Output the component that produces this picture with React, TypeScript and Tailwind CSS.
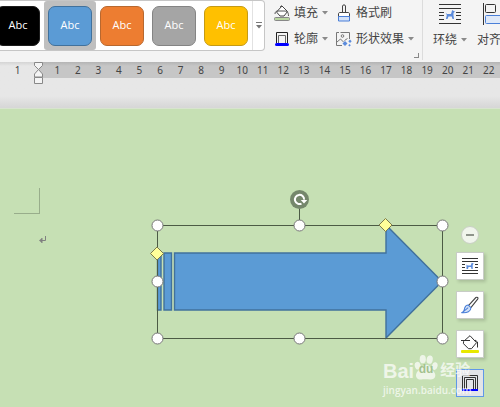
import type { ReactNode } from "react";

const swatches = [
  { name: "Black", style: "bg-black border-[#1c1c1c]" },
  { name: "Blue", style: "bg-[#5b9bd5] border-[#41719c]" },
  { name: "Orange", style: "bg-[#ed7d31] border-[#b8682f]" },
  { name: "Gray", style: "bg-[#a5a5a5] border-[#848484]" },
  { name: "Gold", style: "bg-[#ffc000] border-[#c49a16]" },
];

const rulerMarks = Array.from({ length: 22 }, (_, i) => i + 1);

function Caret() {
  return (
    <svg width="6" height="4" viewBox="0 0 6 4" className="shrink-0" aria-hidden="true">
      <path d="M0 0h6L3 3.5z" fill="#8a8a8a" />
    </svg>
  );
}

function RibbonWrapIcon() {
  return (
    <svg width="22" height="20" viewBox="0 0 22 20" aria-hidden="true">
      <path
        d="M0 .5h22M0 4.500h22M0 8.500h5M0 11.500h5M0 15.500h5M17 8.500h5M17 11.500h5M17 15.500h5M0 19.500h22"
        stroke="#333"
      />
      <path d="M6.500 8.500l1.500 1.500h4l1.200-4 1 .8 1.800.7-1.500 1.500v2.500l.5 3.500h-1.500l-.8-2.500H9.500L8.500 15H7l.8-4z" fill="#5b8bdc" />
    </svg>
  );
}

function WrapIcon() {
  return (
    <svg width="16" height="16" viewBox="0 0 16 16" aria-hidden="true">
      <path
        d="M0 .5h16M0 3.500h16M0 6.500h3M0 9.500h3M0 12.500h16M13 6.500h3M13 9.500h3M0 15.500h16"
        stroke="#333"
      />
      <path d="M4.500 6.500l1.200 1h3l1-2.800 2 .8-1 1.500v4H9.500L9 9H6.500L6 11H4.500z" fill="#5b8bdc" />
    </svg>
  );
}

function RibbonFillIcon() {
  return (
    <svg width="16" height="16" viewBox="0 0 16 16" fill="none" aria-hidden="true">
      <rect x=".5" y="12.500" width="15" height="3" rx="1" fill="#b9d6a0" stroke="#888" />
      <path d="M2.500 7L8 1l5.500 5.500L10 11H6z" fill="#fff" stroke="#444" />
      <path d="M1 9c0-2 1-3 3-3h6c3 0 4.500 1 4.500 5M6 2l2-1.500" stroke="#555" />
    </svg>
  );
}

function FillIcon() {
  return (
    <svg width="18" height="18" viewBox="0 0 18 18" fill="none" aria-hidden="true">
      <rect x="0" y="15" width="18" height="3" rx="1" fill="#e8e800" />
      <path d="M2.500 6.500L9 .7l6.500 7-5 6h-3l-5-5z" fill="#fff" stroke="#333" />
      <path d="M0 5.500h9M14 5l2.500 2v5.500" stroke="#333" />
    </svg>
  );
}

function RibbonOutlineIcon() {
  return (
    <svg width="14" height="15" viewBox="0 0 14 15" fill="none" aria-hidden="true">
      <path d="M1.500 11V.5h11V11" stroke="#222" />
      <path d="M3.500 11V3.500h7V11" stroke="#666" />
      <rect x="0" y="11" width="14" height="3" rx="1.500" fill="#00f" />
    </svg>
  );
}

function OutlineIcon() {
  return (
    <svg width="18" height="18" viewBox="0 0 18 18" fill="none" aria-hidden="true">
      <path d="M1.500 16V1.500h15V16M3.500 15V3.500h11V15M5.500 15V5.500h7V15" stroke="#333" />
      <rect x="1" y="15" width="16" height="2" fill="#00f" />
    </svg>
  );
}

function PainterIcon() {
  return (
    <svg width="14" height="18" viewBox="0 0 14 18" fill="none" aria-hidden="true">
      <path d="M5.500 8.500V2c0-1.500 3-1.500 3 0v6.500" stroke="#444" />
      <path d="M1.500 13V10c0-1 .5-1.500 1.500-1.500h8c1 0 1.500.500 1.500 1.500v3" fill="#fff" stroke="#444" />
      <path d="M1.500 12.500h11V17h-11z" fill="#d3e2f8" stroke="#4a7fd8" />
    </svg>
  );
}

function EffectsIcon() {
  return (
    <svg width="16" height="16" viewBox="0 0 16 16" fill="none" aria-hidden="true">
      <path d="M6 14.500H.5v-13H3M4.500 1.500H13.500V8M1 11l3.500-3 3 3M8.500 9.500l3-2" stroke="#777" />
      <circle cx="6.500" cy="5" r="1.300" stroke="#777" />
      <path d="M9 10l2.500 2.500L9 15l-2.500-2.500zM14 8.500l1.700 1.700-1.700 1.700-1.700-1.700zM13.500 13l1.300 1.300-1.300 1.300-1.300-1.300z" fill="#5b8bdc" />
    </svg>
  );
}

function AlignIcon() {
  return (
    <svg width="24" height="22" viewBox="0 0 24 22" fill="none" aria-hidden="true">
      <path d="M1.500 0v22" stroke="#333" />
      <rect x="3.500" y="1.500" width="10" height="8" rx="1" stroke="#333" />
      <rect x="3.500" y="12.500" width="18" height="8" rx="1" fill="#dfe9f8" stroke="#4a7fd8" />
    </svg>
  );
}

function BrushIcon() {
  return (
    <svg width="18" height="18" viewBox="0 0 20 20" fill="none" aria-hidden="true">
      <path d="M8.500 10.500l8-8.800c1.500-1 3 .3 2 1.800L11 13" fill="#fff" stroke="#444" strokeWidth="1.200" />
      <path d="M8 10l3 3c0 4-4 6-10 5.500 3-1.500 2.500-3 3.200-5.500C5 11 6.500 10 8 10zM2 18l6-5" fill="#d3e2f8" stroke="#4a7fd8" strokeWidth="1.200" />
    </svg>
  );
}

function Command({ icon, label, caret = false }: { icon: ReactNode; label: string; caret?: boolean }) {
  return (
    <button type="button" className="flex h-[26px] items-center gap-1 whitespace-nowrap">
      <span className="flex w-4 justify-center">{icon}</span>
      <span>{label}</span>
      {caret && <Caret />}
    </button>
  );
}

function LargeCommand({ icon, label }: { icon: ReactNode; label: string }) {
  return (
    <button type="button" className="flex shrink-0 flex-col items-center whitespace-nowrap">
      <span className="flex h-[26px] items-center">{icon}</span>
      <span className="flex h-[26px] items-center gap-1">
        {label}
        <Caret />
      </span>
    </button>
  );
}

function Ribbon() {
  return (
    <header className="flex h-[62px] items-start overflow-hidden bg-[#f4f4f4] text-xs text-[#444]">
      <div className="flex h-[51px] w-[265px] shrink-0 overflow-hidden rounded-r-[4px] border border-l-0 border-[#c6c6c6] bg-white">
        <div className="-ml-2 flex shrink-0">
          {swatches.map((s) => (
            <button
              key={s.name}
              type="button"
              aria-label={s.name}
              className={`flex w-[52px] items-center justify-center rounded-[3px] ${s.name === "Blue" ? "bg-[#bfbfbf]" : ""}`}
            >
              <span
                className={`flex h-10 w-11 items-center justify-center rounded-[7px] border font-['Open_Sans','Noto_Sans',sans-serif] text-[11px] text-white ${s.style}`}
              >
                Abc
              </span>
            </button>
          ))}
        </div>
        <button type="button" aria-label="More styles" className="flex flex-1 items-center justify-center border-l border-[#e2e2e2]">
          <svg width="6" height="7" viewBox="0 0 6 7" aria-hidden="true">
            <path d="M0 .5h6" stroke="#777" />
            <path d="M0 3h6L3 6.500z" fill="#777" />
          </svg>
        </button>
      </div>
      <div className="ml-[9px] flex shrink-0 flex-col">
        <Command icon={<RibbonFillIcon />} label="填充" caret />
        <Command icon={<RibbonOutlineIcon />} label="轮廓" caret />
      </div>
      <div className="ml-2 flex shrink-0 flex-col">
        <Command icon={<PainterIcon />} label="格式刷" />
        <Command icon={<EffectsIcon />} label="形状效果" caret />
      </div>
      <div className="flex h-[60px] w-[9px] shrink-0 items-end border-r border-[#dcdcdc] pb-0.5">
        <button type="button" aria-label="Shape settings" className="h-[5px] w-[5px] shrink-0 border-r border-b border-[#888]" />
      </div>
      <div className="ml-2.5 flex shrink-0 gap-2.5 pt-px">
        <LargeCommand icon={<RibbonWrapIcon />} label="环绕" />
        <LargeCommand icon={<AlignIcon />} label="对齐" />
      </div>
    </header>
  );
}

function Ruler() {
  return (
    <div className="relative flex h-4 bg-linear-to-b from-[#d4d4d4] to-[#e7e7e7] to-25% font-['Noto_Sans',sans-serif] text-[10px] leading-4 text-[#444]">
      <span className="w-[39px] shrink-0 pr-1 text-center">1</span>
      <div className="flex-1 overflow-hidden bg-linear-to-b from-[#b4b4b4] to-[#c6c6c6] to-25% pl-2">
        <div className="flex w-[452px]">
          {rulerMarks.map((n) => (
            <span key={n} className="flex-1 text-center">
              {n}
            </span>
          ))}
        </div>
      </div>
      <svg className="absolute top-0 left-[34px]" width="9" height="22" viewBox="0 0 9 22" fill="#f4f4f4" stroke="#888" aria-hidden="true">
        <path d="M.5.5h8v3l-4 4-4-4zM.5 15v-3l4-4.500 4 4.500v3z" />
        <path d="M.5 15.500h8v6h-8z" />
      </svg>
    </div>
  );
}

const handles = [
  [157, 225], [299, 225], [442, 225],
  [157, 281], [442, 281],
  [157, 338], [299, 338], [442, 338],
];

function ArrowShape() {
  return (
    <svg className="absolute top-[78px] left-[149px]" width="302" height="160" viewBox="149 187 302 160" role="img" aria-label="Striped right arrow">
      <path
        d="M157.500 253h3.500v57h-3.500zM164 253h7.500v57H164zM174.500 253H386v-28l56 56.500-56 56.500v-28H174.500z"
        fill="#5b9bd5"
        stroke="#41719c"
        strokeWidth="1.400"
      />
      <path d="M157.500 225.500h285v113h-285zM299.500 208v17" fill="none" stroke="#4c5b45" />
      {handles.map(([x, y]) => (
        <circle key={`${x}-${y}`} cx={x + 0.5} cy={y + 0.5} r="5.500" fill="#fff" stroke="#777" />
      ))}
      <path d="M157 247l6.500 6.500-6.500 6.500-6.500-6.500zM385.500 218.500l6.500 6.500-6.500 6.500-6.500-6.500z" fill="#ffff99" stroke="#7d7a4c" />
      <circle cx="299.500" cy="199.500" r="9.500" fill="#75876c" />
      <path d="M301.500 203.600a4.600 4.600 0 1 1 2.600-4" fill="none" stroke="#fff" strokeWidth="2" />
      <path d="M300.800 200h6.400l-3.200 3.600z" fill="#fff" />
    </svg>
  );
}

const tools = [
  { name: "Wrap text", icon: <WrapIcon /> },
  { name: "Shape style", icon: <BrushIcon /> },
  { name: "Fill", icon: <FillIcon /> },
  { name: "Outline", icon: <OutlineIcon /> },
];

function FloatingTools() {
  return (
    <div className="absolute top-[117px] left-[456px] flex flex-col items-center">
      <button type="button" aria-label="Collapse" className="mb-2 flex h-[18px] w-[18px] items-center justify-center rounded-full border border-[#c9cfc5] bg-[#f0f5ec]">
        <span className="h-0.5 w-2 bg-[#8e948b]" />
      </button>
      <div className="flex flex-col gap-[11px]">
        {tools.map((t) => (
          <button
            key={t.name}
            type="button"
            aria-label={t.name}
            className={`flex h-7 w-7 items-center justify-center border ${
              t.name === "Outline" ? "border-[#6098e8] bg-[#e3e4e8]" : "border-[#c8ccc6] bg-white shadow-[2px_2px_3px_rgba(0,0,0,0.15)]"
            }`}
          >
            {t.icon}
          </button>
        ))}
      </div>
    </div>
  );
}

function Watermark() {
  return (
    <div className="pointer-events-none absolute top-[245px] left-[383px] text-white opacity-70">
      <div className="flex h-[27px] items-end leading-none">
        <span className="font-['Liberation_Sans',Arial,sans-serif] text-[20px] font-bold">Bai</span>
        <span className="relative">
          <svg width="24" height="27" viewBox="0 0 26 28" fill="#fff" aria-hidden="true">
            <ellipse cx="4" cy="12" rx="3.200" ry="4.200" transform="rotate(-15 4 12)" />
            <ellipse cx="9.500" cy="5" rx="3.300" ry="4.500" />
            <ellipse cx="17" cy="5.500" rx="3.300" ry="4.500" transform="rotate(10 17 5.500)" />
            <ellipse cx="22.500" cy="12.500" rx="3" ry="4.200" transform="rotate(15 22.500 12.500)" />
            <path d="M13 11c4 0 5 4 8 7 4 4 2 9-3 9-3 0-7-.5-10 0-5 .5-8-4-4-9 3-3 5-7 9-7z" />
          </svg>
          <span className="absolute inset-x-0 bottom-1 text-center font-['Liberation_Sans',Arial,sans-serif] text-xs font-bold text-[#94b57e]">du</span>
        </span>
        <span className="ml-0.5 pb-1 text-[15px] font-bold">经验</span>
      </div>
      <div className="mt-px font-['Open_Sans','Noto_Sans',sans-serif] text-[10px] leading-4 font-semibold">jingyan.baidu.com</div>
    </div>
  );
}

export default function App() {
  return (
    <div className="flex min-h-screen w-full flex-col overflow-hidden bg-[#c6e0b4] font-['Liberation_Sans','Noto_Sans_CJK_SC',sans-serif]">
      <Ribbon />
      <Ruler />
      <div className="h-[31px] border-b border-[#d8e4cf] bg-linear-to-b from-[#e7e7e7] from-60% to-[#d6d6d6]" />
      <main className="relative min-h-[298px] flex-1 overflow-hidden">
        <div className="ml-3.5 mt-[79px] h-[26px] w-[26px] border-r border-b border-[#98ad8b]" />
        <svg className="ml-[39px] mt-[22px]" width="7" height="8" viewBox="0 0 7 8" fill="none" stroke="#808080" aria-hidden="true">
          <path d="M6.500 0v4.500H1M3 2v5" />
          <path d="M0 4.500L3 2v5z" fill="#808080" stroke="none" />
        </svg>
        <ArrowShape />
        <FloatingTools />
        <Watermark />
      </main>
    </div>
  );
}
